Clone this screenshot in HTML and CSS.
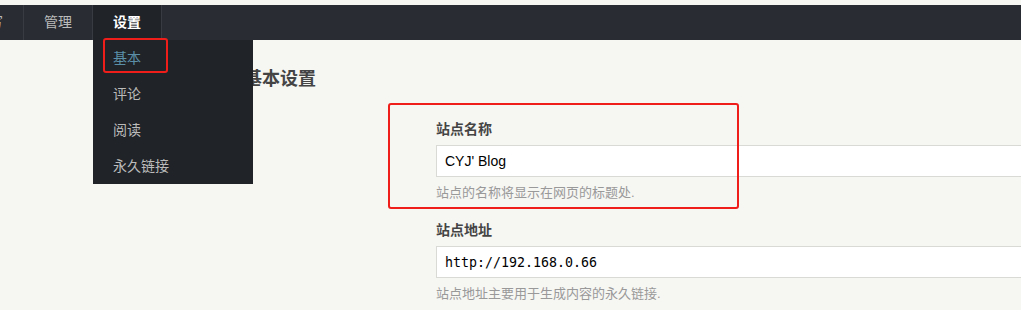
FILE: index.html
```html
<!DOCTYPE html>
<html lang="zh-CN">
<head>
    <meta charset="UTF-8">
    <meta name="viewport" content="width=device-width, initial-scale=1.0">
    <title>基本设置</title>
    <link rel="stylesheet" href="styles.css">
</head>
<body>
    <header class="navbar">
        <ul class="menu">
            <li class="menu-item">撰写</li>
            <li class="menu-item">管理</li>
            <li class="menu-item active">
                设置
                <ul class="dropdown">
                    <li class="dropdown-item current">基本</li>
                    <li class="dropdown-item">评论</li>
                    <li class="dropdown-item">阅读</li>
                    <li class="dropdown-item">永久链接</li>
                </ul>
                <span class="mark mark-small"></span>
            </li>
        </ul>
    </header>

    <main class="main">
        <h2 class="page-title">基本设置</h2>

        <form class="options">
            <div class="field">
                <label class="field-label">站点名称</label>
                <input class="text" type="text" value="CYJ' Blog">
                <p class="description">站点的名称将显示在网页的标题处.</p>
                <span class="mark mark-big"></span>
            </div>
            <div class="field">
                <label class="field-label">站点地址</label>
                <input class="text mono" type="text" value="http://192.168.0.66">
                <p class="description">站点地址主要用于生成内容的永久链接.</p>
            </div>
        </form>
    </main>
</body>
</html>
```

FILE: styles.css
```css
* {
    box-sizing: border-box;
    margin: 0;
    padding: 0;
}

html, body {
    overflow: hidden;
}

body {
    font-family: "Liberation Sans", "Noto Sans CJK SC", sans-serif;
    font-size: 14px;
    background-color: #f6f6f3;
    color: #444;
    padding-top: 5px;
}

.navbar {
    height: 35px;
    background-color: #292d33;
    position: relative;
    z-index: 10;
}

.menu {
    display: flex;
    list-style: none;
    margin-left: -45px;
}

.menu-item {
    position: relative;
    padding: 0 20px;
    line-height: 35px;
    height: 35px;
    color: #bbb;
    border-right: 1px solid #383b41;
}

.menu-item.active {
    background-color: #202328;
    color: #fff;
    font-weight: bold;
}

.dropdown {
    position: absolute;
    top: 35px;
    left: 0;
    width: 160px;
    list-style: none;
    background-color: #202328;
    font-weight: normal;
}

.dropdown-item {
    padding-left: 20px;
    line-height: 36px;
    height: 36px;
    color: #bbb;
}

.dropdown-item.current {
    color: #5b8fa8;
}

/* red annotation boxes */
.mark {
    position: absolute;
    border: 2px solid #f01e1a;
    border-radius: 3px;
    pointer-events: none;
}

.mark-small {
    left: 10px;
    top: 33px;
    width: 65px;
    height: 35px;
}

.mark-big {
    left: -48px;
    top: -16px;
    width: 351px;
    height: 106px;
}

.main {
    padding-top: 29px;
}

.page-title {
    margin-left: 244px;
    font-size: 18px;
    line-height: 20px;
    color: #444;
}

.options {
    padding-left: 436px;
    margin-top: 30px;
}

.field {
    position: relative;
    margin-bottom: 17px;
}

.field-label {
    display: block;
    font-weight: bold;
    line-height: 20px;
    margin-bottom: 6px;
    color: #444;
}

.text {
    display: block;
    width: 700px;
    height: 32px;
    padding: 0 8px;
    border: 1px solid #d9d9d6;
    background-color: #fff;
    font-family: "Liberation Sans", "Noto Sans CJK SC", sans-serif;
    font-size: 14px;
    color: #000;
    outline: none;
}

.text.mono {
    font-family: "DejaVu Sans Mono", "Liberation Mono", monospace;
    font-size: 13.3px;
}

.description {
    margin-top: 6px;
    line-height: 20px;
    font-size: 13px;
    color: #999;
}
```
